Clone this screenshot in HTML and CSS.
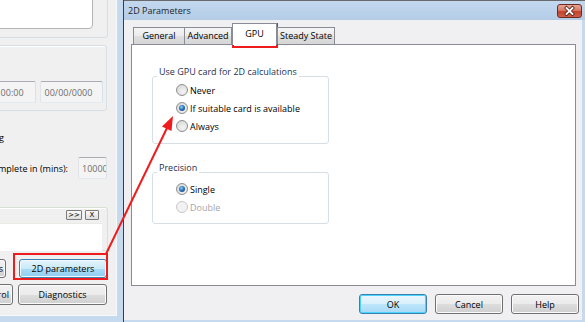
FILE: index.html
```html
<!DOCTYPE html>
<html>
<head>
<meta charset="utf-8">
<link rel="stylesheet" href="styles.css">
</head>
<body>
<div class="desk">
  <div class="bgframe">
    <div class="bgclient">
      <div class="grp g1"><div class="memo"></div></div>
      <div class="grp g2">
        <div class="daterow">
          <div class="field f-time">00:00</div>
          <div class="field f-date">00/00/0000</div>
        </div>
      </div>
      <div class="cutrow r-log"><span>Enable logging</span></div>
      <div class="minsrow">
        <div class="cutrow r-mins"><span>Stop if not complete in (mins):</span></div>
        <div class="field f-mins">10000</div>
      </div>
      <div class="grp g3">
        <div class="mini-bar"><span class="mini">&gt;&gt;</span><span class="mini mini-x">X</span></div>
        <div class="msgbox"></div>
      </div>
      <div class="btnrow r1">
        <div class="btn cut cut1"><span>Results</span></div>
        <div class="btn hot b2d">2D parameters</div>
      </div>
      <div class="btnrow r2">
        <div class="btn cut cut2"><span>Control</span></div>
        <div class="btn bdiag">Diagnostics</div>
      </div>
    </div>
  </div>

  <div class="dialog">
    <div class="titlebar">
      <span class="title">2D Parameters</span>
      <div class="closebtn">
        <svg width="23" height="12" viewBox="0 0 23 12">
          <path d="M8.5 3 L14.5 9 M14.5 3 L8.5 9" stroke="#5a2018" stroke-width="3.4" stroke-linecap="square"/>
          <path d="M8.5 3 L14.5 9 M14.5 3 L8.5 9" stroke="#ffffff" stroke-width="1.8" stroke-linecap="square"/>
        </svg>
      </div>
    </div>
    <div class="client">
      <div class="tabs">
        <div class="tab t-general">General</div>
        <div class="tab t-adv">Advanced</div>
        <div class="tab sel t-gpu">GPU</div>
        <div class="tab t-steady">Steady State</div>
      </div>
      <div class="panel">
        <div class="group g-gpu">
          <div class="gtitle">Use GPU card for 2D calculations</div>
          <div class="rrow first"><span class="radio"></span><span>Never</span></div>
          <div class="rrow"><span class="radio on"></span><span>If suitable card is available</span></div>
          <div class="rrow"><span class="radio"></span><span>Always</span></div>
        </div>
        <div class="group g-prec">
          <div class="gtitle">Precision</div>
          <div class="rrow first"><span class="radio on"></span><span>Single</span></div>
          <div class="rrow dis"><span class="radio"></span><span>Double</span></div>
        </div>
      </div>
      <div class="dlgbtns">
        <div class="btn def">OK</div>
        <div class="btn">Cancel</div>
        <div class="btn">Help</div>
      </div>
    </div>
  </div>

  <svg class="annot" width="585" height="322" viewBox="0 0 585 322">
    <rect x="14" y="254" width="93" height="25" fill="none" stroke="#ee1c1c" stroke-width="2"/>
    <rect x="233" y="24" width="44" height="23" fill="none" stroke="#ee1c1c" stroke-width="2"/>
    <line x1="106" y1="254" x2="167" y2="128" stroke="#ee1c1c" stroke-width="2"/>
    <polygon points="173,116 171.5,131 162,126.5" fill="#ee1c1c"/>
  </svg>
</div>
</body>
</html>
```
FILE: styles.css
```css
html, body {
  margin: 0;
  padding: 0;
}
body {
  width: 585px;
  height: 322px;
  overflow: hidden;
  background: #f0f0f0;
}
.desk {
  width: 585px;
  height: 322px;
  display: flex;
  position: relative;
  overflow: hidden;
  font-family: "Open Sans", "Liberation Sans", sans-serif;
  font-size: 9px;
  color: #000;
}

/* ---------- background window ---------- */
.bgframe {
  flex: none;
  width: 123px;
  height: 322px;
  background: #c6daef;
}
.bgclient {
  width: 116px;
  height: 315px;
  border-right: 1px solid #f7f9fb;
  border-bottom: 1px solid #f7f9fb;
  background: #f0f0f0;
  overflow: hidden;
  display: flex;
  flex-direction: column;
}
.grp {
  flex: none;
  border: 1px solid #d5dfe5;
  border-radius: 3px;
  box-shadow: inset 1px 1px 0 #fff;
  margin-left: -30px;
}
.g1 {
  margin-top: -23px;
  margin-right: 8px;
  height: 61px;
  box-sizing: border-box;
  padding: 0 14px 8px 0;
  display: flex;
}
.memo {
  flex: 1;
  background: #fff;
  border: 1px solid #b5b5b5;
  border-radius: 4px;
}
.g2 {
  margin-top: 7px;
  margin-right: 9px;
  height: 66px;
  box-sizing: border-box;
  padding: 35px 3px 0 0;
}
.daterow {
  display: flex;
  justify-content: flex-end;
  gap: 4px;
}
.field {
  height: 22px;
  box-sizing: border-box;
  border: 1px solid #abadb3;
  border-color: #abadb3 #dbdfe6 #e3e9ef #e2e3ea;
  border-radius: 2px;
  background: #f4f4f4;
  color: #6d6d6d;
  display: flex;
  align-items: center;
  padding-left: 4px;
  white-space: nowrap;
  overflow: hidden;
}
.f-time {
  width: 65px;
  justify-content: flex-end;
  padding-right: 11px;
}
.f-date {
  width: 64px;
}
.cutrow {
  display: flex;
  justify-content: flex-end;
  white-space: nowrap;
  flex: none;
}
.r-log {
  width: 4px;
  height: 12px;
  line-height: 12px;
  margin-top: 21px;
}
.minsrow {
  display: flex;
  align-items: center;
  margin-top: 13px;
  height: 22px;
}
.r-mins {
  width: 68px;
}
.f-mins {
  margin-left: 10px;
  width: 29px;
  padding-left: 3px;
}
.g3 {
  margin-top: 28px;
  margin-right: 8px;
  height: 44px;
  box-sizing: border-box;
  padding: 1px 5px 1px 0;
  border-color: #d8e2d2;
}
.mini-bar {
  display: flex;
  justify-content: flex-end;
  gap: 3px;
  height: 10px;
  margin-top: 1px;
  margin-right: 3px;
}
.mini {
  width: 16px;
  height: 10px;
  box-sizing: border-box;
  border: 1px solid #7a7a7a;
  border-radius: 1px;
  background: linear-gradient(#fafafa, #dedede);
  font-size: 7px;
  line-height: 8px;
  text-align: center;
  font-family: "DejaVu Sans", sans-serif;
}
.mini-x {
  width: 14px;
}
.msgbox {
  margin-top: 3px;
  height: 27px;
  background: #fff;
  border-top: 1px solid #e8ece4;
}
.btnrow {
  display: flex;
  flex: none;
}
.r1 {
  margin-top: 8px;
  height: 19px;
}
.r2 {
  margin-top: 6px;
  height: 21px;
}
.btn {
  box-sizing: border-box;
  border: 1px solid #707070;
  border-radius: 3px;
  background: linear-gradient(#f2f2f2 0%, #ebebeb 50%, #dddddd 51%, #cfcfcf 100%);
  box-shadow: inset 0 0 0 1px #fbfbfb;
  display: flex;
  align-items: center;
  justify-content: center;
  white-space: nowrap;
  overflow: hidden;
}
.cut {
  justify-content: flex-end;
  padding-right: 2px;
}
.cut1 {
  width: 46px;
  margin-left: -40px;
  margin-right: 13px;
}
.cut2 {
  width: 46px;
  margin-left: -33px;
  margin-right: 5px;
  padding-right: 3px;
}
.b2d {
  width: 88px;
}
.bdiag {
  width: 89px;
}
.hot {
  border-color: #3c7fb1;
  background: linear-gradient(#e5f4fc 0%, #c9eaf9 50%, #a9dcf6 51%, #8fcdef 100%);
  box-shadow: inset 0 0 0 1px #f0fafe;
}

/* ---------- dialog ---------- */
.dialog {
  flex: none;
  width: 462px;
  height: 322px;
  box-sizing: border-box;
  border-left: 1px solid #3d3d3d;
  background: #c6daef;
  display: flex;
  flex-direction: column;
}
.titlebar {
  flex: none;
  height: 20px;
  box-sizing: border-box;
  border-top: 1px solid #6a6a6a;
  background: linear-gradient(#c3d8ee, #b4cce7);
  display: flex;
  align-items: flex-start;
  padding-left: 4px;
}
.title {
  line-height: 19px;
  color: #1e1e1e;
}
.closebtn {
  margin-left: auto;
  margin-right: 3px;
  margin-top: 3px;
  width: 25px;
  height: 14px;
  box-sizing: border-box;
  border: 1px solid #6b2a22;
  border-radius: 3px;
  background: linear-gradient(#e7a595 0%, #d77a65 45%, #c2422b 55%, #d2604a 100%);
  display: flex;
  align-items: center;
  justify-content: center;
}
.client {
  flex: 1;
  margin-right: 3px;
  margin-bottom: 2px;
  background: #f0eff2;
  padding: 3px 6px 0 7px;
  display: flex;
  flex-direction: column;
}
.tabs {
  display: flex;
  align-items: flex-end;
  height: 21px;
  margin-left: 2px;
  position: relative;
  z-index: 1;
}
.tab {
  height: 17px;
  box-sizing: border-box;
  border: 1px solid #898c95;
  border-bottom: none;
  background: linear-gradient(#f5f5f5 0%, #ebebeb 50%, #dfdfdf 51%, #d6d6d6 100%);
  display: flex;
  align-items: center;
  justify-content: center;
  margin-right: -1px;
  line-height: 12px;
}
.t-general { width: 52px; }
.t-adv { width: 48px; }
.t-gpu { width: 45px; }
.t-steady { width: 58px; }
.tab.sel {
  height: 22px;
  margin-bottom: -1px;
  background: #fff;
  align-items: flex-start;
  padding-top: 4px;
  margin-left: 1px;
  margin-right: 0;
}
.panel {
  height: 242px;
  box-sizing: border-box;
  border: 1px solid #898c95;
  background: #fff;
  padding: 31px 0 0 20px;
}
.group {
  width: 177px;
  box-sizing: border-box;
  border: 1px solid #d5dfe5;
  border-radius: 3px;
}
.gtitle {
  margin: -11px 0 0 4px;
  padding: 0 2px;
  width: fit-content;
  background: #fff;
  line-height: 12px;
  color: #1e3250;
}
.g-gpu {
  padding-bottom: 8px;
}
.g-gpu .first {
  margin-top: 3px;
}
.g-prec {
  margin-top: 28px;
  padding-bottom: 7px;
}
.g-prec .first {
  margin-top: 6px;
}
.rrow {
  height: 18px;
  display: flex;
  align-items: center;
  padding-left: 23px;
}
.radio {
  width: 12px;
  height: 12px;
  box-sizing: border-box;
  border-radius: 50%;
  border: 1px solid #8e8f8f;
  background: radial-gradient(circle at 60% 65%, #f4f4f4 0%, #e2e2e2 55%, #cfcfcf 100%);
  margin-right: 2px;
  display: flex;
  align-items: center;
  justify-content: center;
}
.radio.on::after {
  content: "";
  width: 6px;
  height: 6px;
  border-radius: 50%;
  background: radial-gradient(circle at 40% 35%, #8fd0f7 0%, #2a75c2 45%, #0c2f6a 100%);
}
.dis {
  color: #a5a5a5;
}
.dis .radio {
  border-color: #c9c9c9;
  background: #f2f2f2;
}
.dlgbtns {
  display: flex;
  justify-content: flex-end;
  gap: 8px;
  margin-top: 8px;
  margin-right: -3px;
}
.dlgbtns .btn {
  width: 68px;
  height: 20px;
}
.btn.def {
  border-color: #3c7fb1;
  background: linear-gradient(#eaf6fd 0%, #d9f0fc 50%, #bee6fd 51%, #a7d9f5 100%);
  box-shadow: inset 0 0 0 1px #48d4fb;
}

/* annotation overlay */
.annot {
  position: absolute;
  left: 0;
  top: 0;
  pointer-events: none;
}
```
